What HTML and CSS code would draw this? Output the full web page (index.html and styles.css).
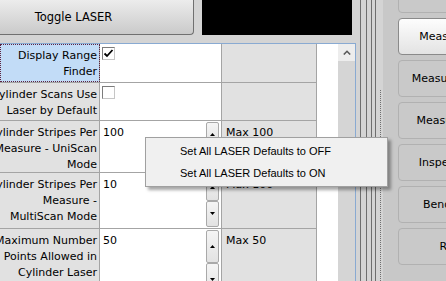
FILE: index.html
```html
<!DOCTYPE html>
<html lang="en">
<head>
  <meta charset="UTF-8">
  <title>LASER Settings</title>
  <link rel="stylesheet" href="styles.css">
</head>
<body>

  <div class="screen">
    <div class="left">
      <div class="topbar">
        <button class="toggle">Toggle LASER</button>
        <div class="video"></div>
      </div>

      <div class="panel">
        <div class="grid">
          <div class="row row-a">
            <div class="label selected"><span>Display Range</span><span>Finder</span></div>
            <div class="value">
              <span class="check">
                <svg width="11" height="11" viewBox="0 0 11 11"><path d="M1.5 5.5 L4 8 L9.5 2" fill="none" stroke="#000" stroke-width="1.8"/></svg>
              </span>
            </div>
            <div class="max"></div>
          </div>

          <div class="row row-b">
            <div class="label"><span>Cylinder Scans Use</span><span>Laser by Default</span></div>
            <div class="value"><span class="check"></span></div>
            <div class="max"></div>
          </div>

          <div class="row row-c">
            <div class="label"><span>Cylinder Stripes Per</span><span>Measure - UniScan</span><span>Mode</span></div>
            <div class="value">
              <div class="val">100</div>
              <div class="spin">
                <div class="spin-btn"><svg width="5" height="3"><path d="M0 3 L2.5 0 L5 3Z" fill="#000"/></svg></div>
                <div class="spin-btn"><svg width="5" height="3"><path d="M0 0 L2.5 3 L5 0Z" fill="#000"/></svg></div>
              </div>
            </div>
            <div class="max">Max 100</div>
          </div>

          <div class="row row-d">
            <div class="label"><span>Cylinder Stripes Per</span><span>Measure -</span><span>MultiScan Mode</span></div>
            <div class="value">
              <div class="val">10</div>
              <div class="spin">
                <div class="spin-btn"><svg width="5" height="3"><path d="M0 3 L2.5 0 L5 3Z" fill="#000"/></svg></div>
                <div class="spin-btn"><svg width="5" height="3"><path d="M0 0 L2.5 3 L5 0Z" fill="#000"/></svg></div>
              </div>
            </div>
            <div class="max">Max 100</div>
          </div>

          <div class="row row-e">
            <div class="label"><span>Maximum Number</span><span>Points Allowed in</span><span>Cylinder Laser</span></div>
            <div class="value">
              <div class="val">50</div>
              <div class="spin">
                <div class="spin-btn"><svg width="5" height="3"><path d="M0 3 L2.5 0 L5 3Z" fill="#000"/></svg></div>
                <div class="spin-btn"><svg width="5" height="3"><path d="M0 0 L2.5 3 L5 0Z" fill="#000"/></svg></div>
              </div>
            </div>
            <div class="max">Max 50</div>
          </div>
        </div>

        <div class="blank"></div>

        <div class="vscroll">
          <div class="scroll-up">
            <svg width="8" height="5" viewBox="0 0 8 5"><path d="M0.8 4.5 L4 1.3 L7.2 4.5" fill="none" stroke="#5a5a5a" stroke-width="1.6"/></svg>
          </div>
        </div>
      </div>
    </div>

    <div class="splitter">
      <span class="ln"></span>
      <span class="ln"></span>
      <span class="ln"></span>
      <span class="ln"></span>
      <span class="dots"></span>
    </div>

    <div class="side">
      <div class="side-list">
        <div class="side-btn">Setup</div>
        <div class="side-btn active">Measure Setup</div>
        <div class="side-btn">Measure Tube Set</div>
        <div class="side-btn">Measure Master</div>
        <div class="side-btn">Inspect Results</div>
        <div class="side-btn">Bender Setup</div>
        <div class="side-btn">Reports</div>
      </div>
    </div>

    <div class="menu">
      <div class="menu-item">Set All LASER Defaults to OFF</div>
      <div class="menu-item">Set All LASER Defaults to ON</div>
    </div>
  </div>

</body>
</html>
```

FILE: styles.css
```css
* {
  box-sizing: border-box;
}
body {
  margin: 0;
  width: 446px;
  height: 281px;
  overflow: hidden;
  background: #d4d4d4;
  font-family: "DejaVu Sans", sans-serif;
  font-size: 11px;
  color: #000;
}
.screen {
  position: relative;
  display: flex;
  height: 281px;
  overflow: hidden;
}
.left {
  width: 356px;
  flex: none;
}
.topbar {
  display: flex;
  gap: 8px;
  height: 35px;
  margin-left: -47px;
}
.toggle {
  width: 241px;
  height: 35px;
  padding: 0;
  border: 1px solid #707070;
  border-top: none;
  border-radius: 0 0 4px 4px;
  background: linear-gradient(#ececec, #cacaca);
  font: 11.5px "DejaVu Sans", sans-serif;
  color: #000;
}
.video {
  width: 150px;
  background: #000;
}
.panel {
  display: flex;
  margin-top: 8px;
  height: 238px;
  overflow: hidden;
  border-top: 1px solid #89aad2;
  border-right: 1px solid #89aad2;
  background: #fff;
}
.grid {
  width: 317px;
  flex: none;
}
.row {
  display: flex;
  border-bottom: 1px solid #a4a4a4;
  line-height: 16px;
}
.row-a { height: 39px; }
.row-b { height: 38px; }
.row-c { height: 52px; }
.row-d { height: 56px; }
.row-e { height: 52px; border-bottom: none; }

.label {
  width: 100px;
  padding: 4px 2px 0 0;
  border-right: 1px solid #a4a4a4;
  background: #e1e1e1;
  display: flex;
  flex-direction: column;
  align-items: flex-end;
  overflow: hidden;
  white-space: nowrap;
}
.label.selected {
  background: #c2dcf7;
  outline: 1px dotted #5c2340;
  outline-offset: -1px;
}
.value {
  width: 122px;
  border-right: 1px solid #a4a4a4;
  display: flex;
}
.val {
  flex: 1;
  padding: 4px 0 0 3px;
}
.check {
  width: 13px;
  height: 13px;
  margin: 3px 0 0 2px;
  border: 1px solid;
  border-color: #7c7c7c #c6c6c6 #c6c6c6 #7c7c7c;
  background: #fff;
  display: flex;
  align-items: center;
  justify-content: center;
}
.spin {
  width: 13px;
  margin: 1px 2px 1px 0;
  display: flex;
  flex-direction: column;
}
.row-e .spin {
  margin-bottom: -15px;
}
.spin-btn {
  flex: 1;
  border: 1px solid #a9a9a9;
  border-radius: 2px;
  background: linear-gradient(#f5f5f5, #e2e2e2);
  display: flex;
  align-items: center;
  justify-content: center;
}
.spin-btn svg {
  display: block;
}
.max {
  width: 95px;
  padding: 4px 0 0 4px;
  border-right: 1px solid #a4a4a4;
  background: #e1e1e1;
}
.blank {
  width: 21px;
  flex: none;
}
.vscroll {
  width: 17px;
  flex: none;
  background: #d5d5d5;
}
.scroll-up {
  height: 17px;
  background: #ededed;
  display: flex;
  align-items: center;
  justify-content: center;
}
.splitter {
  width: 27px;
  flex: none;
  display: flex;
  padding-left: 4px;
}
.ln {
  width: 1px;
  background: #6e6e6e;
  margin-right: 5px;
}
.ln:nth-child(2) { margin-right: 4px; }
.ln:nth-child(3) { margin-right: 3px; }
.ln:nth-child(4) { margin-right: 4px; }
.dots {
  width: 1px;
  margin-top: 90px;
  border-left: 1px dotted #707070;
}
.side {
  flex: 1;
  overflow: hidden;
  background: #c8c8c8;
  padding-left: 15px;
}
.side-list {
  margin-top: -24px;
  display: flex;
  flex-direction: column;
  gap: 5px;
}
.side-btn {
  width: 125px;
  height: 37px;
  flex: none;
  border: 1px solid #b1b1b1;
  border-radius: 4px;
  background: #c9c9c9;
  display: flex;
  align-items: center;
  justify-content: center;
  white-space: nowrap;
}
.side-btn.active {
  border-color: #8a8a8a;
  background: linear-gradient(#fdfdfd, #e3e3e3);
}
.menu {
  position: absolute;
  left: 145px;
  top: 137px;
  width: 243px;
  padding: 2px;
  border: 1px solid #a0a0a0;
  background: #f0f0f0;
  box-shadow: 3px 3px 3px rgba(0, 0, 0, 0.35);
  font: 11px "Liberation Sans", Arial, sans-serif;
}
.menu-item {
  height: 22px;
  line-height: 22px;
  padding-left: 32px;
}
```
